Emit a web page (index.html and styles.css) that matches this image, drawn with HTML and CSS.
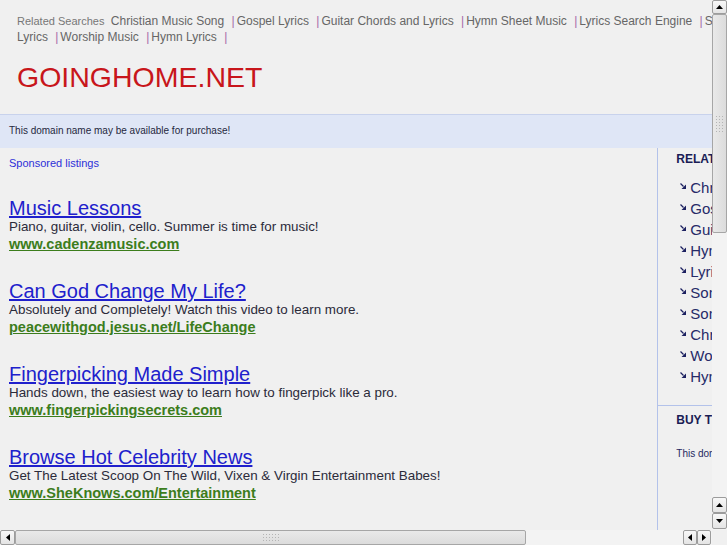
FILE: index.html
```html
<!DOCTYPE html>
<html lang="en">
<head>
  <meta charset="UTF-8">
  <title>goinghome.net</title>
  <link rel="stylesheet" href="styles.css">
</head>
<body>
  <div class="window">
    <div class="viewport">
      <div class="page">
        <div class="header">
          <div class="related">
            <span class="related-label">Related Searches</span>
            <a href="#">Christian Music Song</a> <span class="sep">|</span><a href="#">Gospel Lyrics</a> <span class="sep">|</span><a href="#">Guitar Chords and Lyrics</a> <span class="sep">|</span><a href="#">Hymn Sheet Music</a> <span class="sep">|</span><a href="#">Lyrics Search Engine</a> <span class="sep">|</span><a href="#">Song Lyrics</a> <span class="sep">|</span><a href="#">Worship Music</a> <span class="sep">|</span><a href="#">Hymn Lyrics</a> <span class="sep">|</span>
          </div>
          <h1>GOINGHOME.NET</h1>
        </div>

        <div class="banner">This domain name may be available for purchase!</div>

        <div class="content">
          <div class="main">
            <div class="sponsored">Sponsored listings</div>

            <div class="ad">
              <a class="ad-title" href="#">Music Lessons</a>
              <div class="ad-desc">Piano, guitar, violin, cello. Summer is time for music!</div>
              <a class="ad-url" href="#">www.cadenzamusic.com</a>
            </div>

            <div class="ad">
              <a class="ad-title" href="#">Can God Change My Life?</a>
              <div class="ad-desc">Absolutely and Completely! Watch this video to learn more.</div>
              <a class="ad-url" href="#">peacewithgod.jesus.net/LifeChange</a>
            </div>

            <div class="ad">
              <a class="ad-title" href="#">Fingerpicking Made Simple</a>
              <div class="ad-desc">Hands down, the easiest way to learn how to fingerpick like a pro.</div>
              <a class="ad-url" href="#">www.fingerpickingsecrets.com</a>
            </div>

            <div class="ad">
              <a class="ad-title" href="#">Browse Hot Celebrity News</a>
              <div class="ad-desc">Get The Latest Scoop On The Wild, Vixen &amp; Virgin Entertainment Babes!</div>
              <a class="ad-url" href="#">www.SheKnows.com/Entertainment</a>
            </div>
          </div>

          <div class="sidebar">
            <div class="side-block">
              <h2>RELATED SEARCHES</h2>
              <ul class="side-list">
                <li><svg class="arrow" width="6" height="6" viewBox="0 0 6 6"><path d="M0.5 0.5 L3.5 3.5" stroke="#1c2060" stroke-width="1.2"/><polygon points="6,1.5 6,6 1.5,6" fill="#1c2060"/></svg><a href="#">Christian Music Song</a></li>
                <li><svg class="arrow" width="6" height="6" viewBox="0 0 6 6"><path d="M0.5 0.5 L3.5 3.5" stroke="#1c2060" stroke-width="1.2"/><polygon points="6,1.5 6,6 1.5,6" fill="#1c2060"/></svg><a href="#">Gospel Lyrics</a></li>
                <li><svg class="arrow" width="6" height="6" viewBox="0 0 6 6"><path d="M0.5 0.5 L3.5 3.5" stroke="#1c2060" stroke-width="1.2"/><polygon points="6,1.5 6,6 1.5,6" fill="#1c2060"/></svg><a href="#">Guitar Chords and Lyrics</a></li>
                <li><svg class="arrow" width="6" height="6" viewBox="0 0 6 6"><path d="M0.5 0.5 L3.5 3.5" stroke="#1c2060" stroke-width="1.2"/><polygon points="6,1.5 6,6 1.5,6" fill="#1c2060"/></svg><a href="#">Hymn Sheet Music</a></li>
                <li><svg class="arrow" width="6" height="6" viewBox="0 0 6 6"><path d="M0.5 0.5 L3.5 3.5" stroke="#1c2060" stroke-width="1.2"/><polygon points="6,1.5 6,6 1.5,6" fill="#1c2060"/></svg><a href="#">Lyrics Search Engine</a></li>
                <li><svg class="arrow" width="6" height="6" viewBox="0 0 6 6"><path d="M0.5 0.5 L3.5 3.5" stroke="#1c2060" stroke-width="1.2"/><polygon points="6,1.5 6,6 1.5,6" fill="#1c2060"/></svg><a href="#">Song Lyrics</a></li>
                <li><svg class="arrow" width="6" height="6" viewBox="0 0 6 6"><path d="M0.5 0.5 L3.5 3.5" stroke="#1c2060" stroke-width="1.2"/><polygon points="6,1.5 6,6 1.5,6" fill="#1c2060"/></svg><a href="#">Song Lyrics Search</a></li>
                <li><svg class="arrow" width="6" height="6" viewBox="0 0 6 6"><path d="M0.5 0.5 L3.5 3.5" stroke="#1c2060" stroke-width="1.2"/><polygon points="6,1.5 6,6 1.5,6" fill="#1c2060"/></svg><a href="#">Christian Lyrics</a></li>
                <li><svg class="arrow" width="6" height="6" viewBox="0 0 6 6"><path d="M0.5 0.5 L3.5 3.5" stroke="#1c2060" stroke-width="1.2"/><polygon points="6,1.5 6,6 1.5,6" fill="#1c2060"/></svg><a href="#">Worship Music</a></li>
                <li><svg class="arrow" width="6" height="6" viewBox="0 0 6 6"><path d="M0.5 0.5 L3.5 3.5" stroke="#1c2060" stroke-width="1.2"/><polygon points="6,1.5 6,6 1.5,6" fill="#1c2060"/></svg><a href="#">Hymn Lyrics</a></li>
              </ul>
            </div>
            <div class="side-block buy">
              <h2>BUY THIS DOMAIN</h2>
              <p>This domain name may be available for purchase!</p>
            </div>
          </div>
        </div>
      </div>
    </div>

    <div class="vscroll">
      <div class="sb-btn"><svg width="7" height="4" viewBox="0 0 7 4"><polygon points="0,4 7,4 3.5,0" fill="#000"/></svg></div>
      <div class="sb-thumb v"><span class="grip"></span></div>
      <div class="sb-track"></div>
      <div class="sb-btn"><svg width="7" height="4" viewBox="0 0 7 4"><polygon points="0,4 7,4 3.5,0" fill="#000"/></svg></div>
      <div class="sb-btn"><svg width="7" height="4" viewBox="0 0 7 4"><polygon points="0,0 7,0 3.5,4" fill="#000"/></svg></div>
    </div>

    <div class="hscroll">
      <div class="sb-btn"><svg width="4" height="7" viewBox="0 0 4 7"><polygon points="4,0 4,7 0,3.5" fill="#000"/></svg></div>
      <div class="sb-thumb h"><span class="grip"></span></div>
      <div class="sb-track"></div>
      <div class="sb-btn"><svg width="4" height="7" viewBox="0 0 4 7"><polygon points="4,0 4,7 0,3.5" fill="#000"/></svg></div>
      <div class="sb-btn"><svg width="4" height="7" viewBox="0 0 4 7"><polygon points="0,0 0,7 4,3.5" fill="#000"/></svg></div>
    </div>

    <div class="corner"></div>
  </div>
</body>
</html>
```

FILE: styles.css
```css
body {
  margin: 0;
  background: #f0f0f0;
  font-family: "Liberation Sans", Arial, sans-serif;
  overflow: hidden;
}

a {
  text-decoration: none;
}

/* browser frame: page + scrollbars */
.window {
  display: grid;
  grid-template-columns: 712px 15px;
  grid-template-rows: 530px 15px;
  width: 727px;
  height: 545px;
}

.viewport {
  overflow: hidden;
  background: #f0f0f0;
}

.page {
  width: 920px;
}

/* header */
.header {
  height: 114px;
  padding: 13px 0 0 17px;
  box-sizing: border-box;
}

.related {
  width: 738px;
  font-size: 12px;
  line-height: 16px;
  color: #666;
}

.related-label {
  font-size: 11px;
  color: #777;
  margin-right: 3px;
}

.related a {
  color: #666;
}

.related .sep {
  color: #a56aa8;
  margin: 0 2px 0 4px;
}

h1 {
  margin: 16px 0 0;
  font-size: 28.5px;
  font-weight: normal;
  line-height: 32px;
  color: #c8161b;
}

/* banner */
.banner {
  border-top: 1px solid #c8d2ec;
  background: #dfe6f6;
  height: 33px;
  padding-left: 9px;
  font-size: 10px;
  line-height: 31px;
  color: #252840;
}

/* content */
.content {
  display: flex;
}

.main {
  width: 658px;
  padding: 8px 0 60px 9px;
  box-sizing: border-box;
}

.sponsored {
  font-size: 11px;
  line-height: 14px;
  color: #2d2fd8;
  margin-bottom: 27px;
}

.ad {
  margin-bottom: 27px;
}

.ad-title {
  display: inline-block;
  font-size: 20px;
  line-height: 22px;
  color: #2020cc;
  text-decoration: underline;
}

.ad-desc {
  font-size: 13.4px;
  line-height: 16px;
  color: #2b2b3a;
}

.ad-url {
  display: inline-block;
  font-size: 14.5px;
  font-weight: bold;
  line-height: 17px;
  color: #3c7d1c;
  text-decoration: underline;
}

/* sidebar */
.sidebar {
  width: 262px;
  border-left: 1px solid #b3c2ea;
  min-height: 400px;
}

.side-block {
  padding: 4px 0 0 18px;
  height: 253px;
  border-bottom: 1px solid #b3c2ea;
}

.side-block h2 {
  margin: 0;
  font-size: 12px;
  line-height: 14px;
  color: #1a1c55;
}

.side-list {
  list-style: none;
  margin: 11px 0 0;
  padding: 0 0 0 4px;
}

.side-list li {
  display: flex;
  align-items: center;
  height: 21px;
  font-size: 15px;
}

.side-list .arrow {
  margin: -3px 4px 0 0;
}

.side-list a {
  color: #262a68;
}

.side-block.buy {
  border-bottom: none;
  padding-top: 7px;
}

.buy p {
  margin: 21px 0 0;
  font-size: 10px;
  color: #252860;
}

/* scrollbars */
.vscroll,
.hscroll {
  display: flex;
  background: #f3f3f3;
}

.vscroll {
  flex-direction: column;
  padding: 0 0 1px;
}

.hscroll {
  padding-right: 1px;
}

.sb-btn {
  display: flex;
  align-items: center;
  justify-content: center;
  background: linear-gradient(#f8f8f8, #e4e4e4);
  border: 1px solid #9c9c9c;
  border-radius: 2px;
  box-sizing: border-box;
}

.vscroll .sb-btn {
  height: 16px;
}

.vscroll .sb-btn:first-child {
  height: 14px;
}

.hscroll .sb-btn {
  width: 14px;
}

.hscroll .sb-btn:first-child {
  width: 15px;
}

.sb-thumb {
  display: flex;
  align-items: center;
  justify-content: center;
  background: #e3e3e3;
  border: 1px solid #a6a6a6;
  border-radius: 2px;
  box-sizing: border-box;
}

.sb-thumb.v {
  height: 219px;
  background: linear-gradient(90deg, #e9e9e9, #dcdcdc);
}

.sb-thumb.h {
  width: 511px;
  background: linear-gradient(#e9e9e9, #dcdcdc);
}

.grip {
  background-image: radial-gradient(circle, #b4b4b4 0.8px, transparent 1px);
  background-size: 3px 3px;
}

.sb-thumb.v .grip {
  width: 10px;
  height: 18px;
}

.sb-thumb.h .grip {
  width: 18px;
  height: 10px;
}

.sb-track {
  flex: 1;
}

.corner {
  background: #f0f0f0;
}
```
